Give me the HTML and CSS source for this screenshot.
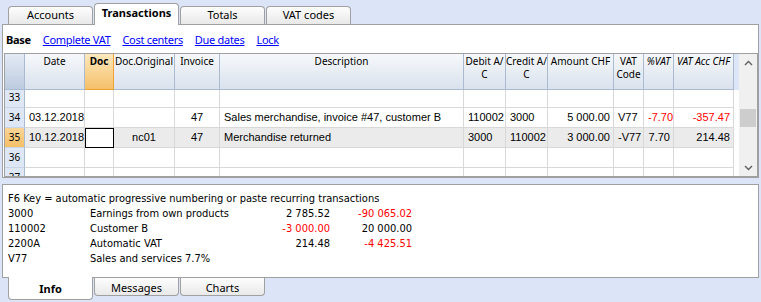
FILE: index.html
```html
<!DOCTYPE html>
<html lang="en">
<head>
    <meta charset="UTF-8">
    <title>Transactions</title>
    <link rel="stylesheet" href="styles.css">
</head>
<body>

    <div class="tabs top-tabs">
        <div class="tab">Accounts</div>
        <div class="tab active">Transactions</div>
        <div class="tab">Totals</div>
        <div class="tab">VAT codes</div>
    </div>

    <div class="panel main">
        <div class="views">
            <b>Base</b>
            <a href="#">Complete VAT</a>
            <a href="#">Cost centers</a>
            <a href="#">Due dates</a>
            <a href="#">Lock</a>
        </div>

        <div class="grid">
            <div class="sheet">
                <div class="row head">
                    <div class="corner"></div>
                    <div>Date</div>
                    <div class="doc">Doc</div>
                    <div>Doc.Original</div>
                    <div>Invoice</div>
                    <div>Description</div>
                    <div>Debit A/<br>C</div>
                    <div>Credit A/<br>C</div>
                    <div>Amount CHF</div>
                    <div>VAT<br>Code</div>
                    <div class="it">%VAT</div>
                    <div class="it">VAT Acc CHF</div>
                    <div class="filler"></div>
                </div>

                <div class="rows">
                    <div class="rows-inner">
                        <div class="row">
                            <div class="num">33</div>
                            <div></div><div></div><div></div><div></div><div></div><div></div>
                            <div></div><div></div><div></div><div></div><div></div><div class="filler"></div>
                        </div>
                        <div class="row">
                            <div class="num">34</div>
                            <div>03.12.2018</div>
                            <div></div>
                            <div class="c"></div>
                            <div class="c">47</div>
                            <div>Sales merchandise, invoice #47, customer B</div>
                            <div>110002</div>
                            <div>3000</div>
                            <div class="r">5 000.00</div>
                            <div>V77</div>
                            <div class="r neg">-7.70</div>
                            <div class="r neg">-357.47</div>
                            <div class="filler"></div>
                        </div>
                        <div class="row selected">
                            <div class="num">35</div>
                            <div>10.12.2018</div>
                            <div class="current"></div>
                            <div class="c">nc01</div>
                            <div class="c">47</div>
                            <div>Merchandise returned</div>
                            <div>3000</div>
                            <div>110002</div>
                            <div class="r">3 000.00</div>
                            <div>-V77</div>
                            <div class="r">7.70</div>
                            <div class="r">214.48</div>
                            <div class="filler"></div>
                        </div>
                        <div class="row">
                            <div class="num">36</div>
                            <div></div><div></div><div></div><div></div><div></div><div></div>
                            <div></div><div></div><div></div><div></div><div></div><div class="filler"></div>
                        </div>
                        <div class="row">
                            <div class="num">37</div>
                            <div></div><div></div><div></div><div></div><div></div><div></div>
                            <div></div><div></div><div></div><div></div><div></div><div class="filler"></div>
                        </div>
                    </div>
                </div>
            </div>

            <div class="scrollbar">
                <div class="arrow">
                    <svg width="9" height="6" viewBox="0 0 9 6"><path d="M1 5 L4.5 1.5 L8 5" fill="none" stroke="#606060" stroke-width="1.4"/></svg>
                </div>
                <div class="track"><div class="thumb"></div></div>
                <div class="arrow">
                    <svg width="9" height="6" viewBox="0 0 9 6"><path d="M1 1 L4.5 4.5 L8 1" fill="none" stroke="#606060" stroke-width="1.4"/></svg>
                </div>
            </div>
        </div>
    </div>

    <div class="panel info">
        <div class="info-grid">
            <div class="wide">F6 Key = automatic progressive numbering or paste recurring transactions</div>
            <div>3000</div><div>Earnings from own products</div><div class="r">2 785.52</div><div class="r neg">-90 065.02</div>
            <div>110002</div><div>Customer B</div><div class="r neg">-3 000.00</div><div class="r">20 000.00</div>
            <div>2200A</div><div>Automatic VAT</div><div class="r">214.48</div><div class="r neg">-4 425.51</div>
            <div>V77</div><div>Sales and services 7.7%</div><div></div><div></div>
        </div>
    </div>

    <div class="tabs bottom-tabs">
        <div class="tab active">Info</div>
        <div class="tab">Messages</div>
        <div class="tab">Charts</div>
    </div>

</body>
</html>
```

FILE: styles.css
```css
body {
    margin: 0;
    width: 761px;
    height: 302px;
    overflow: hidden;
    background-color: #dbe5f7;
    font-family: "Noto Sans", "Open Sans", sans-serif;
    font-size: 11px;
    color: #000;
}

/* tab strips */
.tabs {
    display: flex;
    gap: 1px;
    padding-left: 8px;
}
.tab {
    width: 85px;
    height: 18px;
    box-sizing: border-box;
    border: 1px solid #a0a0a0;
    background: linear-gradient(#fdfdfd, #e9e9e9);
    text-align: center;
    line-height: 16px;
}
.top-tabs {
    height: 24px;
    align-items: flex-end;
}
.top-tabs .tab {
    border-bottom: none;
    border-radius: 4px 4px 0 0;
}
.top-tabs .tab.active {
    height: 22px;
    margin-bottom: -1px;
    padding-top: 1px;
    background: #fff;
    font-weight: bold;
    position: relative;
}
.bottom-tabs .tab {
    border-top: none;
    border-radius: 0 0 4px 4px;
    line-height: 19px;
}
.bottom-tabs .tab.active {
    height: 23px;
    margin-top: -1px;
    padding-top: 3px;
    line-height: 18px;
    background: #fff;
    font-weight: bold;
    position: relative;
}

.panel {
    margin: 0 2px;
    border: 1px solid #a0a0a0;
    background: #fff;
}
.main {
    height: 154px;
    box-sizing: border-box;
}

/* view links */
.views {
    height: 28px;
    display: flex;
    align-items: center;
    gap: 12px;
    padding-left: 3px;
    letter-spacing: -0.3px;
}
.views a {
    color: #0000ff;
}

/* transactions grid */
.grid {
    display: flex;
    margin-left: 1px;
    border: 1px solid #a0a0a0;
}
.sheet {
    width: 734px;
}
.row {
    display: grid;
    grid-template-columns: 20px 60px 29px 61px 45px 244px 42px 42px 66px 30px 30px 60px 5px;
    height: 20px;
}
.row > div {
    box-sizing: border-box;
    border-right: 1px solid #d8d8d8;
    border-bottom: 1px solid #d8d8d8;
    padding: 0 4px;
    line-height: 19px;
    white-space: nowrap;
    overflow: hidden;
    font-family: "Liberation Sans", Arial, sans-serif;
}
.row > .r { text-align: right; padding-right: 3px; }
.row > .c { text-align: center; }
.row > .filler { border: none; padding: 0; }

.row.head {
    height: 36px;
}
.row.head > div {
    border-color: #a9bad1;
    background: linear-gradient(#f6f8fb, #dae2ed);
    font-family: "Noto Sans", "Open Sans", sans-serif;
    font-size: 10px;
    line-height: 13px;
    padding: 1px 0 0;
    text-align: center;
    white-space: normal;
}
.row.head > .it { font-style: italic; }
.row.head > .corner {
    background: linear-gradient(#e3eaf5, #bccbdf);
}
.row.head > .doc {
    background: linear-gradient(#fde8bd, #f5c06a);
    border-color: #f0a238;
    font-weight: bold;
}
.row.head > .filler {
    background: #dce6f6;
    border: none;
}

.rows {
    height: 86px;
    overflow: hidden;
}
.rows-inner {
    margin-top: -2px;
}
.row > .num {
    background: #dde7f5;
    border-right-color: #a9bad1;
    border-bottom-color: #c8d5e7;
    font-family: "Noto Sans", "Open Sans", sans-serif;
    font-size: 10px;
    text-align: center;
    padding: 0;
}
.selected > div {
    background: #ebebeb;
}
.selected > .num {
    background: linear-gradient(#fbd597, #f5bf66);
}
.selected > .current {
    background: #fff;
    outline: 1px solid #000;
    outline-offset: -1px;
}
.selected > .filler {
    background: #fff;
}

.neg {
    color: #ff0000;
}

/* scrollbar */
.scrollbar {
    width: 18px;
    display: flex;
    flex-direction: column;
    background: #f0f0f0;
}
.arrow {
    height: 17px;
    display: flex;
    align-items: center;
    justify-content: center;
}
.track {
    flex: 1;
}
.thumb {
    margin: 38px 1px 0 1px;
    height: 18px;
    background: #cdcdcd;
}

/* info panel */
.info {
    margin-top: 6px;
    height: 94px;
    box-sizing: border-box;
    padding: 6px 0 0 5px;
    font-family: "DejaVu Sans", sans-serif;
    font-stretch: condensed;
    font-size: 11px;
}
.info-grid {
    display: grid;
    grid-template-columns: 82px 150px 90px 82px;
    line-height: 15px;
}
.info-grid .wide {
    grid-column: 1 / -1;
}
.info-grid .r {
    text-align: right;
}
```
